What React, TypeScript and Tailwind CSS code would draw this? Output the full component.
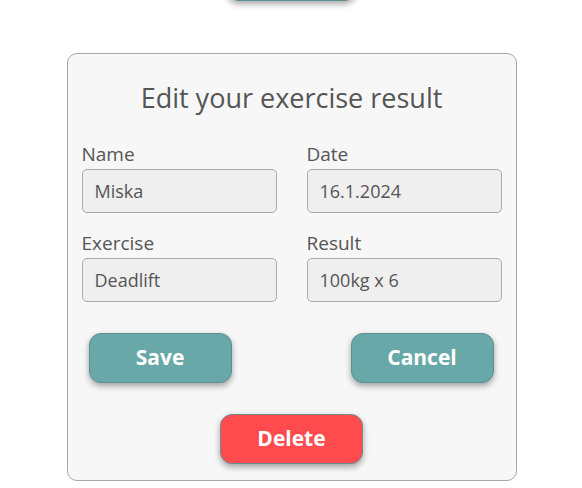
import React from "react";

const font = { fontFamily: '"Open Sans", "Noto Sans", sans-serif' };

function Field({ label, value }: { label: string; value: string }) {
  return (
    <div className="flex flex-col">
      <label className="text-[19px] leading-[24px] font-medium text-[#555] h-[24px] mb-[3px]">{label}</label>
      <div className="h-[44px] rounded-[5px] border border-[#a9a9a9] bg-[#efefef] px-[12px] flex items-center text-[18px] font-medium text-[#555]">
        {value}
      </div>
    </div>
  );
}

export default function App() {
  return (
    <div className="w-[582px] h-[488px] bg-white overflow-hidden flex flex-col items-center" style={font}>
      <div className="-mt-[49px] ml-[1px] w-[129px] h-[50px] rounded-[12px] bg-[#69a8a8] border border-[#5c8f8f] shadow-[0_3px_6px_rgba(0,0,0,0.35)] shrink-0" />
      <div className="mt-[52px] ml-[1px] w-[450px] h-[428px] rounded-[10px] border border-[#a6a6a6] bg-[#f7f7f7] px-[14px] pt-[26px] flex flex-col shrink-0">
        <h1 className="text-center text-[27px] leading-[36px] font-medium text-[#555]">Edit your exercise result</h1>
        <div className="mt-[26px] grid grid-cols-2 gap-x-[30px] gap-y-[18px]">
          <Field label="Name" value="Miska" />
          <Field label="Date" value="16.1.2024" />
          <Field label="Exercise" value="Deadlift" />
          <Field label="Result" value="100kg x 6" />
        </div>
        <div className="mt-[31px] flex justify-between pl-[7px] pr-[8px]">
          <button className="w-[143px] h-[50px] rounded-[12px] bg-[#69a8a8] border border-[#5e8f8f] text-white font-bold text-[21px] shadow-[0_3px_6px_rgba(0,0,0,0.35)]">Save</button>
          <button className="w-[143px] h-[50px] rounded-[12px] bg-[#69a8a8] border border-[#5e8f8f] text-white font-bold text-[21px] shadow-[0_3px_6px_rgba(0,0,0,0.35)]">Cancel</button>
        </div>
        <div className="mt-[31px] flex justify-center">
          <button className="w-[143px] h-[50px] rounded-[12px] bg-[#ff4b4e] border border-[#6c8f8f] text-white font-bold text-[21px] shadow-[0_3px_6px_rgba(0,0,0,0.35)]">Delete</button>
        </div>
      </div>
    </div>
  );
}
